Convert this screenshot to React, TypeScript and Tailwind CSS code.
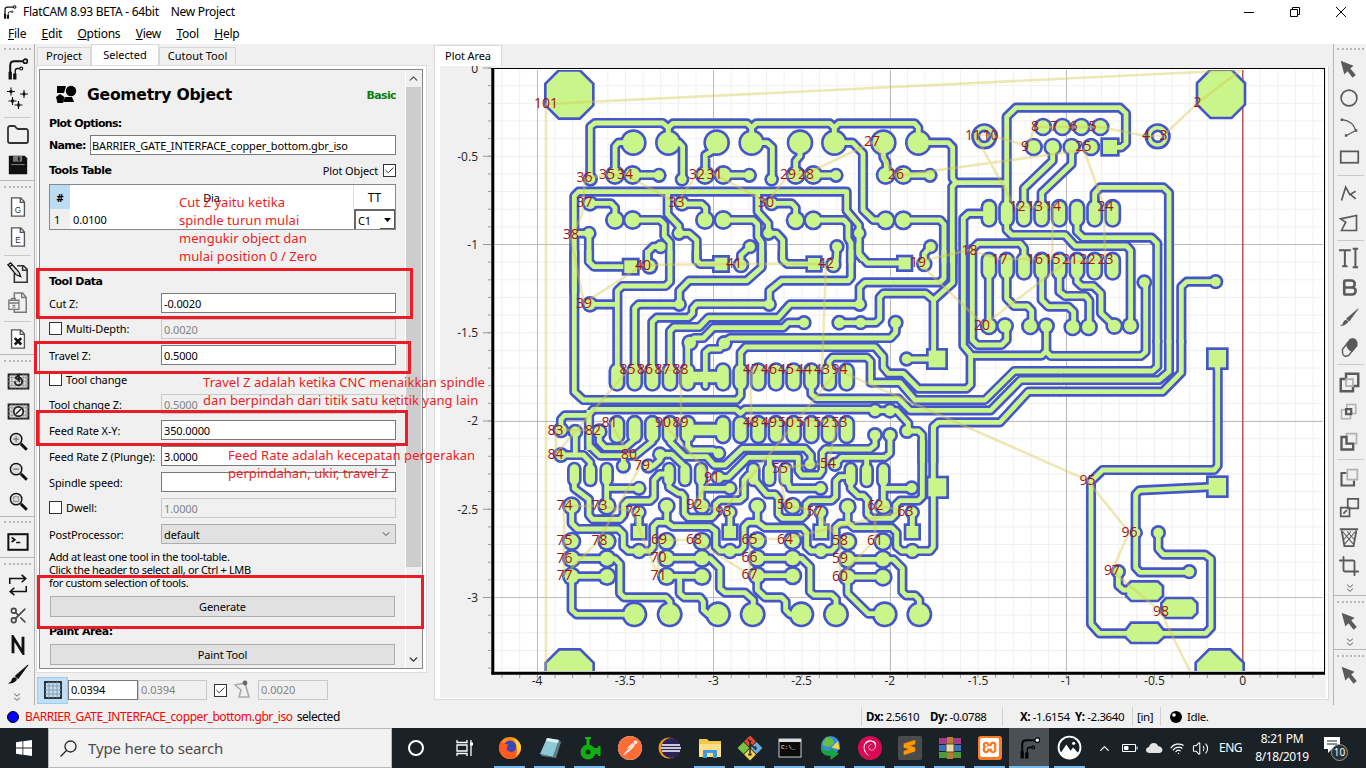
import React from "react";
import { SiPostman, SiDebian, SiXampp, SiSublimetext } from "react-icons/si";
import {
  FolderIcon, SquareTerminal, ZoomIn, ZoomOut, Search, Scissors, Bold, Crop, ChevronUp, ChevronDown, Check,
  Wifi, Volume2,
} from "lucide-react";

/* ---------- board geometry ---------- */
/* Each section holds coordinates in thirds of a pixel, relative to its own origin. */
type Section = {
  x: number;
  y: number;
  traces: string;
  pads?: number[][]; // cx, cy, r
  squares?: number[][]; // cx, cy, half
  ovals?: number[][]; // x, y1, y2, width
  rings?: number[][];
  polys?: string[];
  bars?: number[][]; // x1, x2, y
};

const octagon = (cx: number, cy: number) =>
  [[-30, -68], [30, -68], [68, -30], [68, 31], [30, 69], [-30, 69], [-68, 31], [-68, -30]]
    .map(([a, b]) => `${cx + a},${cy + b}`)
    .join(" ");

const row = (xs: number[], y1: number, y2: number, w: number) => xs.map((x) => [x, y1, y2, w]);
const grid = (xs: number[], ys: number[], r: number) => xs.flatMap((x) => ys.map((y) => [x, y, r]));

const SECTIONS: Section[] = [
  {
    x: 490, y: 60,
    traces:
      "M301 355V200L315 189H518L535 203L549 190H771L785 203L799 190H1019L1033 203L1047 190H1274L1285 203V245 M535 200V248 M785 200V248 M1033 200V248 " +
      "M430 248H385L375 260V345 M428 345H507 M535 248H568L578 260V358 M680 248V265L646 285V345 M700 345H778 " +
      "M253 700V408L266 395H1070V452L1107 495V520 M533 395V462L567 498V520H597L620 540V610 M803 395V455L835 490V520H860L878 540V600 " +
      "M300 430H363L375 443V480 M428 480H510L523 493V528L540 547V610 M253 520H297V610 M512 560H490L473 577V610 " +
      "M576 432H635L647 443V480 M700 480H790L803 493V530L815 548V610",
    pads: [...grid([430, 535, 680], [248], 32), ...grid([375, 428, 645, 700], [345], 22), [507, 346, 15], [301, 357, 15], [576, 358, 14],
      [300, 430, 17], [576, 430, 17], ...grid([375, 428, 645, 700], [480], 22), [297, 520, 15], [567, 520, 15], [512, 560, 15]],
    polys: [octagon(238, 103)],
  },
  {
    x: 730, y: 60,
    traces:
      "M65 248H112L127 262V358 M210 248V288L197 303V345 M250 345H318 M313 248H368L399 280V450L430 480H467 M460 248V292L469 307V345 M520 345H600 " +
      "M565 248H655L668 262V355L678 368H830 M678 368L667 380V610 M125 430H185L197 443V480 M250 480H342L354 493V535L363 550V610 " +
      "M387 520V585L400 600 M520 480H630L642 493V610",
    pads: [...grid([65, 210, 313, 460, 565], [248], 32), [58, 346, 15], [125, 358, 14], [318, 346, 15], [600, 346, 15],
      ...grid([197, 250, 467, 520], [345], 22), ...grid([197, 250, 467, 520], [481], 22), [125, 430, 16], [115, 520, 15], [387, 520, 15],
      [60, 560, 15], [321, 560, 15], [602, 560, 15]],
  },
  {
    x: 940, y: 60,
    traces:
      "M200 460V170L228 143H540L558 160V250L545 262H520 M338 261V302L252 385V440 M395 261V312L305 398V440 " +
      "M200 480V510L215 525H375L405 558H560L572 572V798 M411 480V515L430 533H635L652 550V850 M464 460V400L480 382H670L687 398V850 " +
      "M827 665H740L724 680V850 M147 461H85L70 475V857L95 887H305L318 874L332 888H603L617 876V668 M319 798V880 " +
      "M252 600V565L240 550H115L97 567V840L112 855H185L200 840V800 M147 640V798 M200 640V715L222 738H262L275 752V798 " +
      "M305 640V720L325 740H385L401 755V800 M358 640V695L375 708H437L448 722V800 M411 640V665L425 678H460L483 700V760L523 798 M832 896V930",
    pads: [...grid([309, 367, 424, 481], [201], 20), ...grid([281, 338, 395, 453], [261], 20), [147, 798, 20], [195, 798, 19], [271, 798, 20],
      [319, 798, 18], [398, 801, 20], [446, 801, 20], [523, 798, 19], [571, 797, 19], [613, 667, 16], [827, 665, 15]],
    squares: [[510, 261, 21], [832, 896, 26]],
    ovals: [...row([147, 200, 252, 305, 358, 411, 464, 518], 442, 478, 35), ...row([147, 200, 252, 305, 358, 411, 464, 518], 600, 637, 35)],
    rings: [[133, 229], [653, 229]],
    polys: [octagon(843, 101)],
  },
  {
    x: 490, y: 250,
    traces:
      "M253 0V425L280 450H740L752 437V400 M297 0V35L312 50H400 M473 0V40 M540 0V95L527 108H397L382 122V380 M620 0V30L630 42H680 " +
      "M300 163H382 M434 380V175L446 163H568V122L597 92H770L815 52V0 M487 380V215L500 203H595L608 190V175L620 162H838 " +
      "M540 380V243L552 231H628L655 203H865L900 163H1109 M593 380V290L600 278L612 264H640L670 233H880L895 218H942 " +
      "M646 412V307L658 297H690L703 275L720 264H1202L1217 247V218 M297 600V495L310 478H738L752 490L765 478H1155 M213 540V508L224 496H297",
    pads: [[479, 48, 18], [300, 163, 17], [568, 163, 15], [600, 278, 18], [703, 280, 17], [213, 540, 17], [646, 410, 5]],
    squares: [[422, 50, 19], [693, 42, 19]],
    ovals: row([381, 434, 487, 540, 593, 699, 752, 805, 858, 911, 964, 1017, 1070], 362, 400, 35),
    bars: [[593, 699, 381]],
  },
  {
    x: 730, y: 250,
    traces:
      "M158 0V30L172 42H245 M363 0V82L355 92H155L118 122V163 M386 -20V10L412 39H520 M642 0V85L630 97H405L389 112V163 " +
      "M60 -10L33 15V42 M321 -10L318 45 M602 -10L583 12V42 M668 0V98L611 150L587 130H460L449 142V207L437 218H330 M611 150V327 M530 327H600 " +
      "M32 380V308L47 291H435L460 320V352L475 370H520L565 416H710L722 404V317 M297 380V335L308 322H410L422 334V398H510L555 450H765L853 363H993 " +
      "M244 400V432L260 446H505L540 481H782L872 390H993 M435 482H500L535 520V543H565L577 555V640 M610 640V530L625 517H810L895 425H993",
    pads: [[33, 45, 17], [310, 45, 17], [583, 42, 17], [118, 163, 15], [389, 163, 15], [222, 218, 15], [328, 218, 16], [392, 218, 15],
      [497, 218, 16], [530, 327, 15], [435, 482, 16], [480, 482, 16], [531, 543, 16]],
    squares: [[252, 42, 18], [524, 40, 18], [621, 327, 25]],
  },
  {
    x: 490, y: 400,
    traces:
      "M297 30V135L330 167H435L487 125V90 M328 95V125L345 143H405L434 118 M400 198V167 M213 165H280L301 187V220 M256 95V165 " +
      "M253 230V265L297 298V345L308 358H390L401 345V315L412 303H480L492 292V240L508 222H537 M350 230V318 M350 265H447 " +
      "M245 318V370L262 387H385L400 402V440L415 453H480L490 440V380L502 367H530 M530 318V367L548 380H660L677 393V440L690 453H750L762 440V380L775 367H802 " +
      "M447 337V395 M720 337V395 M245 476H375L390 492V580L402 592H528L540 605V642 M351 529H245V630L260 643H433 M530 475H660L690 505V565L705 578H765L790 600V643 " +
      "M530 529H636 M569 529V580L583 592H630L640 605V630L655 643H684 M475 198H490L510 180V163H545L585 200 " +
      "M537 230V262L565 280H575L583 290V340L595 353H665L677 340V312L690 301H750L762 290V240L775 225H790 M633 230V318 M633 265H720 " +
      "M593 108V138L603 150H670L686 160 M540 108V125L585 170H650L672 195H705L758 145H945L963 165V190 M685 232H715L775 172H925V212L935 225H988L997 212V158L1007 147H1140L1155 135V105",
    pads: [[256, 95, 16], [328, 95, 17], [213, 165, 16], [400, 198, 15], [447, 265, 15], ...grid([245, 351], [318, 424, 476, 529], 21),
      [447, 453, 17], [530, 318, 19], [636, 318, 19], [447, 337, 15], [720, 337, 15], [720, 453, 17], ...grid([530, 636], [424, 475, 529], 21),
      ...grid([433, 539, 684], [643], 31), [475, 198, 15], [510, 163, 16], [720, 265, 15], [686, 160, 15], [685, 232, 16]],
    squares: [[447, 396, 18], [720, 396, 18]],
    ovals: [...row([381, 434, 487, 540, 593, 699, 752, 805, 858, 911, 964, 1017, 1070], 70, 108, 35), ...row([253, 301, 350, 537, 585, 633, 790, 838, 887], 207, 240, 28)],
    bars: [[593, 699, 90]],
    polys: [octagon(239, 820)],
  },
  {
    x: 730, y: 400,
    traces:
      "M315 193L335 172H465L480 160V105 M410 172V205 M118 172V205 M167 230L180 265H272 M70 235L110 283H135L145 295V343L157 355H215L228 343V312L240 302H305L317 290V243L330 230H362 " +
      "M362 240V265L385 287H400L412 300V343L425 355H485L497 343V315L510 302H565L577 290V120 M460 230V318 M460 265H545 " +
      "M82 318V367L105 383H217L230 397V440L243 453H305L317 440V382L330 370H353 M353 320V367L372 383H485L500 398V440L515 453H600L610 440V80 " +
      "M273 337V395 M547 337V395 M82 475H215L240 500V575L252 585H305L318 598V643 M188 527H82V570L105 592H155L167 605V630L180 643H214 " +
      "M353 478H490L517 505V575L528 586H555L568 600V643 M459 531H353V580L415 641H464",
    pads: [[240, 193, 15], [315, 193, 15], [435, 105, 16], [480, 105, 16], [272, 265, 15], [545, 264, 15], [188, 318, 20], [82, 318, 19], [353, 320, 19],
      [460, 318, 20], [273, 337, 15], [547, 337, 15], [273, 453, 17], [547, 453, 17], ...grid([82, 188], [422, 475, 527], 21),
      ...grid([353, 459], [425, 478, 531], 21), ...grid([68, 214, 318, 464, 568], [643], 31)],
    squares: [[273, 396, 18], [547, 396, 18], [622, 262, 27]],
    ovals: row([362, 410, 460], 207, 243, 28),
  },
  {
    x: 1060, y: 340,
    traces:
      "M292 0V80L277 93H0 M327 0V95L297 120H0 M364 0V98L308 155H0 M473 56V377L463 390H128L93 424V852L118 880H437L453 863V657L435 644H310L295 627V578 " +
      "M470 440L238 451L227 463V683L240 697H388 M175 695V737L190 750H215",
    pads: [[295, 578, 15], [388, 695, 15], [175, 695, 15], [229, 578, 12]],
    squares: [[472, 440, 26]],
    polys: [octagon(479, 1000), "215,728 292,728 305,740 305,766 292,779 215,779 202,766 202,740", "320,778 395,778 408,791 408,817 395,830 320,830 308,817 308,791",
      "200,872 215,852 292,852 308,872 308,890 292,905 215,905 200,890"],
  },
];

const BLUE = "#4557c8";
const GREEN = "#caf58b";

function Layer({ grow, color }: { grow: number; color: string }) {
  return (
    <g fill="none" stroke={color} strokeLinejoin="round">
      {SECTIONS.map((s, i) => (
        <g key={i} transform={`translate(${s.x} ${s.y}) scale(.33333)`}>
          <path d={s.traces} strokeWidth={14.5 + 2 * grow} />
          {s.pads?.map(([x, y, r], k) => <circle key={k} cx={x} cy={y} r={r + grow} fill={color} stroke="none" />)}
          {s.squares?.map(([x, y, h], k) => (
            <rect key={k} x={x - h - grow} y={y - h - grow} width={2 * (h + grow)} height={2 * (h + grow)} fill={color} stroke="none" />
          ))}
          {s.ovals?.map(([x, a, b, w], k) => <path key={k} d={`M${x} ${a}V${b}`} strokeWidth={w + 2 * grow} strokeLinecap="round" />)}
          {s.bars?.map(([a, b, y], k) => <path key={k} d={`M${a} ${y}H${b}`} strokeWidth={32 + 2 * grow} />)}
          {s.rings?.map(([x, y], k) => <circle key={k} cx={x} cy={y} r={26} strokeWidth={11 + 2 * grow} />)}
          {s.polys?.map((p, k) => <polygon key={k} points={p} fill={color} strokeWidth={Math.max(0.1, 2 * grow)} strokeLinejoin="miter" />)}
        </g>
      ))}
    </g>
  );
}

const LABELS: [string, number, number][] = [
  ["101", 546, 103], ["2", 1197.5, 102], ["3", 1163.5, 135], ["4", 1146, 135], ["5", 1092.5, 126], ["6", 1073.5, 126], ["7", 1054, 126], ["8", 1035, 126],
  ["9", 1025, 146], ["10", 990.5, 135], ["11", 973, 135], ["12", 1017.5, 206], ["13", 1035, 206], ["14", 1053, 206], ["24", 1105.5, 206],
  ["25", 1083.5, 146], ["18", 969.5, 250], ["17", 999.5, 259], ["16", 1035, 259], ["15", 1052.5, 259], ["21", 1070, 259], ["22", 1087.5, 259], ["23", 1105.5, 259],
  ["19", 918, 262], ["20", 982, 325], ["27", 872, 141], ["26", 896, 174], ["28", 806, 174], ["29", 788, 174], ["30", 766, 202], ["31", 714.5, 174], ["32", 697, 174],
  ["33", 676.5, 202], ["34", 625, 174], ["35", 607, 174], ["36", 584.5, 177], ["37", 584.5, 202], ["38", 571, 234], ["39", 584, 303], ["40", 643, 265], ["41", 734, 263], ["42", 826, 263],
  ["43", 822, 369], ["44", 804, 369], ["45", 786, 369], ["46", 769, 369], ["47", 751, 369], ["94", 839.5, 369], ["48", 751, 422], ["49", 769, 422], ["50", 786, 422],
  ["51", 804, 422], ["52", 821.5, 422], ["53", 839.5, 422], ["54", 828, 463], ["55", 780, 468], ["56", 785, 504], ["57", 814.5, 511], ["58", 840, 540], ["59", 840, 558], ["60", 840, 576],
  ["61", 875, 540], ["62", 875.5, 505], ["63", 905.5, 511], ["64", 785, 539], ["65", 749.5, 539], ["66", 749.5, 557], ["67", 749.5, 574], ["68", 694, 539], ["69", 659, 539],
  ["70", 658.5, 557], ["71", 658.5, 575], ["72", 633, 511], ["73", 599.5, 505], ["74", 564.5, 505], ["75", 564.5, 540], ["76", 564.5, 558], ["77", 564.5, 575], ["78", 599.5, 540],
  ["79", 642, 465], ["80", 629, 454], ["81", 609.5, 422], ["82", 593, 430], ["83", 555.5, 430], ["84", 555.5, 454], ["85", 627.5, 369], ["86", 645, 369], ["87", 662.5, 369], ["88", 680.5, 369],
  ["89", 680.5, 422], ["90", 663, 422], ["91", 712, 477], ["92", 694.5, 504], ["93", 723.5, 511], ["95", 1087.5, 480], ["96", 1129.5, 532], ["97", 1112, 570], ["98", 1161, 611],
];

const TRAVEL =
  "M546 671V104L1241 70L1199 102L1163 136H1146L1100 127H1035L1028 146L990 135H975L1015 207H1053L1052 259H999L969 250L918 262L984 325L1066 262L1105 259L1104 206L1084 150L896 176L873 142L806 174H789L767 202L714 174H697L677 203L626 175H607L585 178L582 215L571 238L584 303L643 265L734 264H826L822 370H751V421H838L828 463L779 468L785 505L814 511L840 540V576L875 540V505L905 511L785 539H750V575L694 540H658V576L632 511L598 506H564V576L599 540L641 465L628 453L610 422 M593 430H556V454L628 370H681V422H662L712 477L694 504L723 511L838 370L1087 480L1129 532L1112 571L1160 611L1190 671";

function Plot() {
  const minorX = Array.from({ length: 48 }, (_, i) => 1242.5 - 17.63 * (i - 4));
  const minorY = Array.from({ length: 35 }, (_, i) => 68 + 17.65 * i);
  return (
    <svg viewBox="440 66 886 632" className="block h-[632px] w-[886px]" fontFamily="'Open Sans','Noto Sans',sans-serif">
      <rect x="440" y="66" width="886" height="632" fill="#f0f0f0" />
      <rect x="492" y="69" width="832" height="605" fill="#fff" />
      <g stroke="#f0f0f0" strokeWidth="1">
        {minorX.filter((x) => x > 496 && x < 1322).map((x) => <path key={x} d={`M${x} 70V671`} />)}
        {minorY.filter((y) => y > 70 && y < 671).map((y) => <path key={y} d={`M495 ${y}H1323`} />)}
      </g>
      <g stroke="#bcbcbc" strokeWidth="1">
        <path d="M537.5 70V671M713.5 70V671M890.5 70V671M1066.5 70V671M495 244.5H1323M495 421.5H1323M495 597.5H1323" />
      </g>
      <path d="M1242.8 70V671" stroke="#a83c3c" strokeWidth="1.3" />
      <clipPath id="board"><rect x="494" y="70" width="829" height="601" /></clipPath>
      <g clipPath="url(#board)">
        <Layer grow={8} color={BLUE} />
        <Layer grow={0} color={GREEN} />
        <path d={TRAVEL} fill="none" stroke="#d6c84e" strokeOpacity=".42" strokeWidth="2.6" />
      </g>
      <g fill="#a31515" fontSize="14" textAnchor="middle">
        {LABELS.map(([t, x, y]) => <text key={t} x={x} y={y + 5}>{t}</text>)}
      </g>
      <path d="M492.8 68V674.5" stroke="#000" strokeWidth="3" />
      <path d="M491.5 673.2H1325" stroke="#000" strokeWidth="3" />
      <path d="M491 68.5H1325M1324.5 68V674" stroke="#000" strokeWidth="1" fill="none" />
      <g stroke="#999" strokeWidth="1">
        {minorX.filter((x) => x > 496 && x < 1322).map((x) => <path key={x} d={`M${x} 675V678`} />)}
        {minorY.filter((y) => y < 671).map((y) => <path key={y} d={`M488 ${y}H491`} />)}
        {minorY.filter((_, i) => i % 5 === 0).map((y) => <path key={y} d={`M483 ${y}H491`} />)}
      </g>
      <g fill="#222" fontSize="12">
        {["-4", "-3.5", "-3", "-2.5", "-2", "-1.5", "-1", "-0.5", "0"].map((t, i) => (
          <text key={t} x={537 + i * 88.2} y="685" textAnchor="middle">{t}</text>
        ))}
        {["0", "-0.5", "-1", "-1.5", "-2", "-2.5", "-3"].map((t, i) => (
          <text key={t} x="478" y={72.5 + i * 88.2} textAnchor="end">{t}</text>
        ))}
      </g>
    </svg>
  );
}

/* ---------- toolbars ---------- */
function Ico({ children, w = 24, c = "#111" }: { children: React.ReactNode; w?: number; c?: string }) {
  return (
    <svg viewBox="0 0 24 24" width={w} height={w} fill="none" stroke={c} strokeWidth="2" className="shrink-0">
      {children}
    </svg>
  );
}
const Cell = ({ children }: { children: React.ReactNode }) => <div className="flex h-[30px] w-full items-center justify-center pl-[2px]">{children}</div>;
const RCell = ({ children }: { children: React.ReactNode }) => <div className="flex h-[29.6px] w-full items-center justify-center pr-[2px]">{children}</div>;
const Dots = ({ className = "" }: { className?: string }) => (
  <div className={`flex w-full items-center justify-center ${className}`}><div className="w-[27px] border-t-2 border-dotted border-[#b8b8b8]" /></div>
);
const Sep = () => <div className="flex h-[6px] w-full items-center justify-center"><div className="h-px w-[27px] bg-[#c9c9c9]" /></div>;

const FPath = () => (
  <>
    <path d="M3.5 18V8Q3.5 3.5 8 3.5H18" strokeWidth="2.2" />
    <path d="M9 18V14Q9 11.5 11.5 11.5H14" strokeWidth="1.5" />
    <circle cx="20" cy="3.5" r="2.2" strokeWidth="1.8" /><circle cx="15.5" cy="11.5" r="1.6" strokeWidth="1.3" />
    <path d="M3.5 15V23.5M8.5 17V23.5" strokeWidth="3.6" />
  </>
);
const Doc = ({ children }: { children?: React.ReactNode }) => (
  <Ico w={22}><path d="M5 2H15L19 6.5V22H5ZM14.5 2V7H19" strokeWidth="1.5" stroke="#555" fill="#fff" />{children}</Ico>
);
const Arrow = () => (
  <svg viewBox="0 0 24 24" width="22" height="22" fill="#5a5a5a" className="mr-[2px] shrink-0"><path d="M4 3L18 8.5L14.5 11.5L20.5 18.5L17 21.5L11.5 14.5L8 18Z" /></svg>
);
const Chev = () => <Ico w={10} c="#555"><path d="M5 4L12 10L19 4M5 14L12 20L19 14" strokeWidth="2.2" /></Ico>;
const ReplotGrid = ({ children }: { children: React.ReactNode }) => (
  <svg viewBox="0 0 24 18" width="23" height="17" fill="none" stroke="#222">
    <rect x="1.5" y="1.5" width="21" height="15" strokeWidth="2" fill="#ddd" />
    <path d="M5 0V18M9 0V18M13 0V18M17 0V18M20 0V18M0 5H24M0 9H24M0 13H24" strokeWidth=".7" stroke="#888" />
    {children}
  </svg>
);

function LeftToolbar() {
  return (
    <div className="flex w-[35px] shrink-0 flex-col items-center overflow-hidden border-r border-[#b5b5b5] bg-[#f0f0f0]">
      <Dots className="h-[10px] shrink-0" />
      <Cell><Ico w={22}><FPath /></Ico></Cell>
      <Cell><Ico><path d="M5 0.5V8.5M1 4.5H9M18 3V11M14 7H22M6.500 10V18M2.500 14H10.500M12.500 14V22M8.500 18H16.500" strokeWidth="1.1" /><path d="M5 3V6M18 5.500V8.500M6.500 12.500V15.500M12.500 16.500V19.500" strokeWidth="2.600" /></Ico></Cell>
      <Sep />
      <Cell><FolderIcon size={24} strokeWidth={1.8} color="#333" /></Cell>
      <Cell><Ico w={20}><path d="M2 1H20L23 4V23H1V1Z" fill="#111" stroke="none" /><path d="M6 1H17V8H6Z" fill="#777" stroke="none" /><path d="M13 2V7" /><path d="M4 11.5H20" stroke="#999" strokeWidth="1" /></Ico></Cell>
      <Dots className="h-[12px] shrink-0 border-t border-[#b5b5b5]" />
      <Cell><Doc><text x="12" y="18" fontSize="9" textAnchor="middle" fill="#333" stroke="none" fontFamily="Liberation Sans">G</text></Doc></Cell>
      <Cell><Doc><text x="12" y="18" fontSize="9" textAnchor="middle" fill="#333" stroke="none" fontFamily="Liberation Sans">E</text></Doc></Cell>
      <Sep />
      <Cell><Ico w={22}><path d="M11 4H18L22 8V22H8V12M17 4V9H22" strokeWidth="1.7" stroke="#333" /><path d="M1 3L4 1L13 11L15 16L10 14L1 3ZM3 5L6 3" strokeWidth="1.4" fill="#ddd" /></Ico></Cell>
      <Cell><Ico w={22} c="#777"><path d="M8 8V1H17L21 6V22H8V19M16 1V6H21" strokeWidth="1.6" /><path d="M2 9H13V19H2ZM2 12H13M5 9V7H9V9M6 14L9 17M9 14L6 17" strokeWidth="1.4" /></Ico></Cell>
      <Sep />
      <Cell><Doc><path d="M8.5 11L15.500 18M15.500 11L8.500 18" strokeWidth="2.800" /></Doc></Cell>
      <Dots className="h-[12px] shrink-0 border-t border-[#b5b5b5]" />
      <Cell><ReplotGrid><path d="M8 9A4 4 0 1 0 12 5M12.500 2V8L9 5Z" strokeWidth="2" /></ReplotGrid></Cell>
      <Cell><ReplotGrid><circle cx="12" cy="9" r="5" fill="#eee" strokeWidth="1.8" /><path d="M9 12L15 6" strokeWidth="1.5" /></ReplotGrid></Cell>
      {[<path key="a" d="M9 5.500V12.500M5.500 9H12.500" stroke="#777" strokeWidth="1.600" />, <path key="b" d="M5.500 9H12.500" stroke="#777" strokeWidth="1.600" />, <rect key="c" x="6" y="6" width="6" height="6" stroke="#999" strokeWidth="1.500" />].map((mark, i) => (
        <Cell key={i}><Ico w={19}><circle cx="9" cy="9" r="7.200" fill="#ddd" strokeWidth="1.800" />{mark}<path d="M15 15L22.500 22.500" strokeWidth="3.600" /></Ico></Cell>
      ))}
      <Dots className="h-[11px] shrink-0 border-t border-[#b5b5b5]" />
      <Cell><Ico w={22}><rect x="1.500" y="3.500" width="21" height="17" strokeWidth="2.200" /><path d="M5 7L8.500 9.500L5 12M10 12.500H14.500" strokeWidth="1.800" /></Ico></Cell>
      <Dots className="h-[13px] shrink-0 border-t border-[#b5b5b5]" />
      <Cell><Ico w={22}><path d="M3 11V5H20M16 1L20.5 5L16 9M21 13V19H4M8 15L3.5 19L8 23" strokeWidth="1.7" /></Ico></Cell>
      <Cell><Scissors size={19} color="#444" /></Cell>
      <Cell><Ico w={20}><path d="M6 22V2.500L18 21.500V2" strokeWidth="3.400" /></Ico></Cell>
      <Cell><Ico w={22}><path d="M23 1L9 13L12 16Z" fill="#111" strokeWidth="1" /><path d="M1 21Q5 20 5 17Q7 13 10 15Q12 17 9 19Q6 22 1 21Z" fill="#111" stroke="none" /></Ico></Cell>
      <div className="flex h-[14px] items-center"><Chev /></div>
    </div>
  );
}

function RightToolbar() {
  const g = "#5a5a5a";
  const l = "#b0b0b0";
  return (
    <div className="flex w-[33px] shrink-0 flex-col items-center overflow-hidden border-l border-[#b5b5b5] bg-[#f0f0f0]">
      <Dots className="h-[10px] shrink-0" />
      <RCell><Arrow /></RCell>
      <RCell><Ico w={20} c={g}><circle cx="12" cy="12" r="9.5" /></Ico></RCell>
      <RCell><Ico w={20} c={g}><path d="M4 2Q17 4 20 15L9 21" strokeWidth="1.600" /><path d="M2 2H5M7 21H10M19 15H22" strokeWidth="3" /></Ico></RCell>
      <RCell><Ico w={21} c={g}><rect x="2" y="5" width="20" height="13" /></Ico></RCell>
      <Sep />
      <RCell><Ico w={20} c={g}><path d="M3 21L8 5L13 14L20 10M20 19L14 14" /></Ico></RCell>
      <RCell><Ico w={20} c={g}><path d="M3 21L8 11L2 7L21 3V21Z" /></Ico></RCell>
      <Sep />
      <RCell><Ico w={22} c={g}><path d="M1 3.500H14M7.500 3.500V21M4.500 21H10.500M19 2V22M16 2H22M16 22H22" strokeWidth="2.200" /></Ico></RCell>
      <RCell><Bold size={21} strokeWidth={3} color={g} /></RCell>
      <RCell><Ico w={20} c={g}><path d="M23 1L9 13L12 16Z" fill={g} strokeWidth="1" /><path d="M1 21Q5 20 5 17Q7 13 10 15Q12 17 9 19Q6 22 1 21Z" fill={g} stroke="none" /></Ico></RCell>
      <RCell><Ico w={21} c={g}><path d="M4 14L13 3Q18 1 20 6L20 10L11 21Q5 24 4 18Z" strokeWidth="1.6" /><path d="M9 8L13 3Q18 1 20 6V10L15 16Q10 14 9 8Z" fill={g} /></Ico></RCell>
      <Sep />
      <RCell><Ico w={21} c={g}><path d="M8 2H22V16H16V22H2V8H8Z" strokeWidth="2.800" /><path d="M8 8H16V16H8Z" stroke={l} /></Ico></RCell>
      <RCell><Ico w={18} c={l}><path d="M9 2H21V14H9ZM2 9H14V21H2Z" /><path d="M8 8H15V15H8Z" stroke={g} strokeWidth="2.8" /></Ico></RCell>
      <RCell><Ico w={20} c={l}><path d="M9 2H21V14H9Z" /><path d="M3 6H9V14H17V21H3Z" stroke={g} strokeWidth="2.8" /></Ico></RCell>
      <Sep />
      <RCell><Ico w={20} c={g}><path d="M9 6H3V21H18V15" strokeWidth="2.6" /><path d="M10 2H22V14H10Z" stroke={l} /></Ico></RCell>
      <RCell><Ico w={21} c={g}><path d="M10 2H22V13H10ZM2 12H12V22H2Z" /><path d="M5 19L9 15" /></Ico></RCell>
      <RCell><Ico w={22} c={g}><path d="M2 3.500H22M4 5L7 22H17L20 5" /><path d="M5 6L17 20M10 6L18 15M19 6L7 20M14 6L6 15" strokeWidth="1.2" /></Ico></RCell>
      <RCell><Crop size={22} color={g} /></RCell>
      <div className="flex h-[14px] items-center"><Chev /></div>
      <Dots className="h-[12px] shrink-0 border-t border-[#b5b5b5]" />
      <div className="flex h-[28px] items-center"><Arrow /></div>
      <div className="flex h-[14px] items-center"><Chev /></div>
      <Dots className="h-[12px] shrink-0 border-t border-[#b5b5b5]" />
      <div className="flex h-[28px] items-center"><Arrow /></div>
    </div>
  );
}

/* ---------- geometry form ---------- */
const Box = ({ checked = false }: { checked?: boolean }) => (
  <span className="flex h-[13px] w-[13px] shrink-0 items-center justify-center border border-[#333] bg-white">{checked && <Check size={11} color="#222" />}</span>
);

function Field({ label, value, disabled, check, mt = "mt-[6px]" }: { label: string; value: string; disabled?: boolean; check?: boolean; mt?: string }) {
  return (
    <div className={`flex h-[20px] items-center ${mt}`}>
      <div className={`flex w-[112px] shrink-0 items-center whitespace-nowrap ${check ? "-mt-[2px]" : ""}`}>
        {check && <span className="mr-[4px]"><Box /></span>}{label}
      </div>
      <div className={`flex h-[20px] w-[235px] items-center border pl-[2px] pt-px ${disabled ? "border-[#c8c8c8] bg-[#f0f0f0] text-[#838383]" : "border-[#7a7a7a] bg-white"}`}>{value}</div>
    </div>
  );
}

function Form() {
  return (
    <div className="flex h-[600px] w-[384px] overflow-hidden border border-[#828790] bg-[#f0f0f0] text-[11px] leading-[13px] tracking-[-0.12px]">
      <div className="w-[365px] shrink-0 pl-[9px]">
        <div className="flex h-[45px] w-[347px] items-center pt-[5px]">
          <svg viewBox="0 0 22 20" width="22" height="20" className="ml-[6px]"><path d="M2 1H11L9 8H2ZM10 12H17L19 17H8Z" /><circle cx="16" cy="6" r="5.2" /><path d="M5 9L9.5 12L8 18H2.5L1 12Z" /></svg>
          <span className="ml-[10px] text-[15.6px] font-bold tracking-[-0.25px] [font-family:'DejaVu_Sans']">Geometry Object</span>
          <span className="ml-auto font-bold tracking-[-0.65px] text-[#0b800b] [font-family:'DejaVu_Sans']">Basic</span>
        </div>
        <div className="flex h-[17px] items-center font-bold tracking-[-0.65px] [font-family:'DejaVu_Sans']">Plot Options:</div>
        <div className="mt-[3px] flex h-[20px] w-[347px] items-center">
          <span className="w-[41px] font-bold tracking-[-0.65px] [font-family:'DejaVu_Sans']">Name:</span>
          <div className="flex h-[20px] flex-1 items-center border border-[#7a7a7a] bg-white pl-[1px] pt-px tracking-[-0.15px]">BARRIER_GATE_INTERFACE_copper_bottom.gbr_iso</div>
        </div>
        <div className="mt-[5px] flex h-[20px] w-[347px] items-center">
          <span className="font-bold tracking-[-0.5px] [font-family:'DejaVu_Sans']">Tools Table</span>
          <span className="ml-auto mr-[5px]">Plot Object</span><Box checked />
        </div>
        <div className="mt-[4px] grid h-[46px] w-[347px] grid-cols-[20px_1fr_41px] grid-rows-[24px_1fr] border border-[#828790] bg-white">
          <div className="flex items-center justify-center bg-[#bcdcf4] font-bold">#</div>
          <div className="flex items-center justify-center border-r border-[#ddd]">Dia</div>
          <div className="flex items-center justify-center text-[12px]">TT</div>
          <div className="flex items-center bg-[#f0f0f0] pl-[4px]">1</div>
          <div className="flex items-center pl-[3px]">0.0100</div>
          <div className="flex items-center border-l-2 border-t-2 border-[#666] pl-[2px]">C1
            <span className="ml-auto flex h-[18px] w-[15px] items-center justify-center border-b border-r border-[#555] bg-white"><svg width="7" height="4"><path d="M0 0H7L3.5 4Z" /></svg></span>
          </div>
        </div>
        <div className="mt-[42px] flex h-[18px] items-center font-bold tracking-[-0.5px] [font-family:'DejaVu_Sans']">Tool Data</div>
        <Field label="Cut Z:" value="-0.0020" mt="mt-[3px]" />
        <Field label="Multi-Depth:" value="0.0020" disabled check />
        <Field label="Travel Z:" value="0.5000" />
        <div className="mt-[4px] flex h-[20px] items-center"><span className="mr-[4px]"><Box /></span>Tool change</div>
        <Field label="Tool change Z:" value="0.5000" disabled mt="mt-[5px]" />
        <Field label="Feed Rate X-Y:" value="350.0000" />
        <Field label="Feed Rate Z (Plunge):" value="3.0000" />
        <Field label="Spindle speed:" value="" />
        <Field label="Dwell:" value="1.0000" disabled check />
        <div className="mt-[6px] flex h-[20px] items-center">
          <span className="w-[112px] pt-[1px]">PostProcessor:</span>
          <div className="flex h-[20px] w-[235px] items-center border border-[#acacac] bg-[#e1e1e1] pl-[2px] pr-[3px]">default<ChevronDown size={12} className="ml-auto" color="#444" /></div>
        </div>
        <div className="mt-[6px] whitespace-nowrap tracking-[-0.34px]">Add at least one tool in the tool-table.<br />Click the header to select all, or Ctrl + LMB<br />for custom selection of tools.</div>
        <div className="ml-[1px] mt-[7px] flex h-[21px] w-[345px] items-center justify-center border border-[#adadad] bg-[#e1e1e1]">Generate</div>
        <div className="mt-[5px] flex h-[18px] items-center font-bold tracking-[-0.5px] [font-family:'DejaVu_Sans']">Paint Area:</div>
        <div className="ml-[1px] mt-[4px] flex h-[21px] w-[345px] items-center justify-center border border-[#adadad] bg-[#e1e1e1]">Paint Tool</div>
      </div>
      <div className="flex w-[16px] flex-col items-center border-l border-white">
        <div className="flex h-[17px] items-center"><ChevronUp size={13} strokeWidth={2.6} color="#555" /></div>
        <div className="h-[480px] w-[15px] bg-[#cdcdcd]" />
        <div className="mt-auto flex h-[18px] items-center"><ChevronDown size={13} strokeWidth={2.6} color="#333" /></div>
      </div>
    </div>
  );
}

function LeftPanel() {
  return (
    <div className="flex w-[399px] shrink-0 flex-col pl-[1px] text-[11px]">
      <div className="flex h-[21px] items-end pl-[1px]">
        <div className="flex h-[18px] w-[54px] items-center justify-center border border-b-0 border-[#d9d9d9] bg-[#f0f0f0]">Project</div>
        <div className="flex h-[21px] w-[68px] items-center justify-center border border-b-0 border-[#d9d9d9] bg-white">Selected</div>
        <div className="flex h-[18px] w-[77px] items-center justify-center border border-b-0 border-[#d9d9d9] bg-[#f0f0f0]">Cutout Tool</div>
      </div>
      <div className="h-[608px] w-[391px] border border-[#dcdcdc] bg-white p-[3px] pl-[2px]"><Form /></div>
      <div className="mt-[3px] flex h-[28px] items-center pl-[1px]">
        <div className="flex h-[27px] w-[31px] items-center justify-center border border-[#99cdf5] bg-[#bfdff6]">
          <svg width="18" height="18" viewBox="0 0 18 18" fill="none" stroke="#222"><rect x="1" y="1" width="16" height="16" strokeWidth="1.8" /><path d="M5 1V17M9 1V17M13 1V17M1 5H17M1 9H17M1 13H17" stroke="#8a9aa8" /></svg>
        </div>
        <div className="flex h-[20px] w-[70px] items-center border border-[#7a7a7a] bg-white pl-[2px]">0.0394</div>
        <div className="flex h-[20px] w-[69px] items-center border border-[#c8c8c8] pl-[2px] text-[#838383]">0.0394</div>
        <span className="ml-[7px]"><Box checked /></span>
        <svg width="18" height="20" viewBox="0 0 18 20" className="ml-[6px]" fill="none" stroke="#aaa" strokeWidth="1.6"><path d="M2 5L12 3L16 17H6L8 10Z" /><circle cx="12" cy="3" r="2.4" fill="#666" stroke="none" /></svg>
        <div className="ml-[7px] flex h-[20px] w-[70px] items-center border border-[#c8c8c8] pl-[2px] text-[#838383]">0.0020</div>
      </div>
    </div>
  );
}

/* ---------- taskbar ---------- */
const APPS: { icon: React.ReactNode; line?: boolean; active?: boolean }[] = [
  { line: true, icon: <svg viewBox="0 0 24 24" width="24"><circle cx="12" cy="12" r="11" fill="#ff8a16" /><circle cx="12" cy="11" r="6.5" fill="#3b47b8" /><path d="M3 5Q6 9 11 8Q8 10 9 14Q13 18 18 14Q20 8 15 2Q23 5 23 13Q21 23 12 23Q2 22 1 12Q1 8 3 5Z" fill="#ff5a1f" /><path d="M15 2Q23 5 23 12Q22 18 18 20Q21 11 15 2Z" fill="#ffd43a" /></svg> },
  { line: true, icon: <svg viewBox="0 0 24 24" width="24"><path d="M9 2L21 4L15 21L2 18Z" fill="#8fc9d6" /><path d="M9 2L21 4L20 7L8 5Z" fill="#e6eef0" /><path d="M15 21L21 4L23 6L18 22L4 20L2 18Z" fill="#5f7f8a" /></svg> },
  { line: true, icon: <svg viewBox="0 0 24 24" width="24"><path d="M7 1H13V3H11.500V9.500H8.500V3H7Z" fill="#18b818" /><circle cx="10" cy="16" r="7.500" fill="#12ad12" /><path d="M16 12H20V10H22.500V20H20V18H16Z" fill="#12ad12" /><circle cx="10" cy="16" r="2.500" fill="#043d04" /></svg> },
  { icon: <SiPostman size={24} color="#ff6c37" className="rounded-full bg-white" /> },
  { icon: <svg viewBox="0 0 24 24" width="24"><circle cx="11" cy="12" r="10.5" fill="#f7941e" /><circle cx="13" cy="12" r="10" fill="#2c2255" /><path d="M4 9H22M3 12H23M4 15H22" stroke="#fff" strokeWidth="1.6" /></svg> },
  { line: true, icon: <svg viewBox="0 0 24 24" width="24"><path d="M1 3H9L11 5H23V21H1Z" fill="#f3c64c" /><path d="M1 8H23V21H1Z" fill="#ffe08a" /><path d="M5 14H19V22H15V17H9V22H5Z" fill="#3a9be0" /></svg> },
  { line: true, icon: <svg viewBox="0 0 24 24" width="26"><path d="M12 0.500L17.500 6L12 11.500L6.500 6Z" fill="#e8492f" /><path d="M18 6.500L23.500 12L18 17.500L12.500 12Z" fill="#6fa8dc" /><path d="M6 6.500L11.500 12L6 17.500L0.500 12Z" fill="#7ac143" /><path d="M12 12.500L17.500 18L12 23.500L6.500 18Z" fill="#f2d14c" /><path d="M10 4L12 6V17M12 8L16 12" stroke="#222" strokeWidth="1.3" fill="none" /><path d="M12 17V19M16 12H18M12 5V6" stroke="#222" strokeWidth="3" /></svg> },
  { line: true, icon: <svg viewBox="0 0 24 24" width="24"><rect x="1" y="3" width="22" height="18" fill="#0b0b0b" stroke="#ccc" /><rect x="1" y="3" width="22" height="3" fill="#ddd" /><text x="3" y="13" fontSize="6" fill="#fff" fontFamily="Liberation Mono">C:\_</text></svg> },
  { line: true, icon: <svg viewBox="0 0 24 24" width="25"><circle cx="13" cy="10" r="9" fill="#3a8dde" /><path d="M9 2Q16 2 16 8Q12 14 5 9Z" fill="#62c13e" /><path d="M14 12L20 6L22 14Z" fill="#ffd83b" /><path d="M4 9Q5 16 13 15V12L21 18L13 24V20Q2 20 4 9Z" fill="#19a340" /></svg> },
  { line: true, icon: <span className="flex h-[24px] w-[24px] items-center justify-center rounded-full bg-[#d70a53]"><SiDebian size={16} color="#fff" /></span> },
  { line: true, icon: <span className="flex h-[24px] w-[24px] items-center justify-center rounded-[2px] bg-[#4b4b4b]"><SiSublimetext size={15} color="#ff9800" /></span> },
  { line: true, icon: <svg viewBox="0 0 24 24" width="24"><path d="M1 2H23V8H1Z" fill="#a33a88" /><path d="M1 9H23V15H1Z" fill="#3d6fc4" /><path d="M1 16H23V22H1Z" fill="#4c9a3a" /><path d="M9 1H15V23H9Z" fill="#b97a34" /><rect x="8" y="8" width="8" height="8" fill="#e8d9a8" stroke="#553" /></svg> },
  { line: true, icon: <span className="flex h-[24px] w-[24px] items-center justify-center rounded-[3px] bg-[#fb7a24]"><SiXampp size={19} color="#fff" /></span> },
  { active: true, line: true, icon: <svg viewBox="0 0 24 24" width="22" fill="none" stroke="#050505" strokeWidth="2.2"><FPath /><circle cx="20" cy="3.500" r="1.800" fill="#fff" stroke="none" /></svg> },
  { line: true, icon: <svg viewBox="0 0 24 24" width="25" fill="none" stroke="#fff" strokeWidth="1.8"><circle cx="12" cy="12" r="10.5" /><path d="M3 18L9 9L13 15L15.500 12L21 18Q17 22 12 22Q6 22 3 18Z" fill="#fff" stroke="none" /><circle cx="16" cy="8" r="1.5" fill="#fff" stroke="none" /></svg> },
];

function Taskbar() {
  return (
    <div className="flex h-[40px] shrink-0 items-stretch bg-[#1b2227] text-white">
      <div className="flex w-[48px] items-center justify-center"><svg width="16" height="16" viewBox="0 0 16 16" fill="#fff"><path d="M0 2.2L6.5 1.3V7.6H0ZM7.3 1.2L16 0V7.6H7.3ZM0 8.4H6.5V14.7L0 13.8ZM7.3 8.4H16V16L7.3 14.8Z" /></svg></div>
      <div className="flex w-[344px] items-center border border-[#b9b9b9] bg-[#f2f2f2] text-[15px] text-[#4a4a4a]">
        <svg width="17" height="17" viewBox="0 0 17 17" className="ml-[11px]" fill="none" stroke="#222" strokeWidth="1.300"><circle cx="10.500" cy="6.500" r="5.500" /><path d="M6.500 10.500L0.500 16.500" /></svg>
        <span className="ml-[11px] tracking-[-0.15px]">Type here to search</span>
      </div>
      <div className="flex w-[48px] items-center justify-center"><span className="h-[16px] w-[16px] rounded-full border-[2.5px] border-white" /></div>
      <div className="flex w-[49px] items-center justify-center"><svg width="18" height="16" viewBox="0 0 18 16" fill="none" stroke="#fff" strokeWidth="1.3"><path d="M1 0V2.5H11V0M1 5H11V11H1ZM1 16V13.5H11V16M15 0V16" /><path d="M14 4H17" strokeWidth="3" /></svg></div>
      {APPS.map((a, i) => (
        <div key={i} className={`flex w-[40px] flex-col items-center justify-between ${a.active ? "bg-[#4a5054]" : ""}`}>
          <div className="flex h-[38px] items-center pl-[1px] pt-[1px]">{a.icon}</div>
          {a.line && <div className={a.active ? "h-[2px] w-full bg-[#76b9ed]" : "h-[2px] w-[31px] bg-[#76b9ed]"} />}
        </div>
      ))}
      <div className="flex flex-1 items-center pl-[8px] text-[12px]">
        <ChevronUp size={15} />
        <svg width="16" height="10" viewBox="0 0 16 10" fill="none" stroke="#fff" className="ml-[10px]"><path d="M.5 1.500H13.500V8.500H.5ZM15 3.500V6.500" /><path d="M2.500 3.500H6V6.500H2.500Z" fill="#fff" /></svg>
        <svg width="17" height="12" viewBox="0 0 17 12" className="ml-[8px]"><path d="M4 11Q0 11 0 8Q0 5.500 3 5Q4 1 8 1Q11 1 12 4Q16 4.500 16.500 8Q16 11 13 11Z" fill="#e4e4e4" /></svg>
        <Wifi size={15} className="ml-[7px] -rotate-12" />
        <Volume2 size={17} strokeWidth={1.5} className="ml-[7px]" />
        <span className="ml-[10px] w-[24px] tracking-[-0.5px]">ENG</span>
        <div className="ml-[8px] w-[62px] whitespace-nowrap text-center leading-[18px] tracking-[-0.4px]">8:21 PM<br />8/18/2019</div>
        <div className="relative ml-[10px] h-[24px] w-[28px]">
          <svg width="18" height="18" viewBox="0 0 18 18"><path d="M1 1H17V13H9L5 17V13H1Z" fill="#fff" /><path d="M4 5H14M4 8H14" stroke="#1b2227" /></svg>
          <span className="absolute left-[8px] top-[8px] flex h-[17px] w-[17px] items-center justify-center rounded-full border border-[#999] bg-[#2b3136] text-[10px]">10</span>
        </div>
      </div>
    </div>
  );
}

const MarkBox = ({ className }: { className: string }) => <div className={`pointer-events-none absolute border-[3px] border-[#ed1c24] ${className}`} />;
const Note = ({ className, children }: { className: string; children: React.ReactNode }) => (
  <div className={`pointer-events-none absolute whitespace-nowrap text-[13px] leading-[18px] tracking-[0.05px] text-[#ed1c24] ${className}`}>{children}</div>
);

export default function App() {
  return (
    <div className="relative flex h-[768px] w-[1366px] flex-col overflow-hidden bg-[#f0f0f0] text-[12px] text-black [font-family:'Noto_Sans','Open_Sans',sans-serif]">
      <div className="flex h-[24px] shrink-0 items-center bg-white">
        <svg viewBox="0 0 24 24" width="14" height="14" className="ml-[3px]" fill="none" stroke="#111" strokeWidth="2"><FPath /></svg>
        <span className="ml-[6px] whitespace-pre tracking-[-0.3px]">FlatCAM 8.93 BETA - 64bit</span>
        <span className="ml-[12px] tracking-[-0.3px]">New Project</span>
        <div className="ml-auto flex items-center gap-[36px] pr-[20px]">
          <svg width="10" height="10"><path d="M0 5.5H10" stroke="#000" /></svg>
          <svg width="10" height="10" fill="none" stroke="#000"><path d="M.5 2.5H7.5V9.5H.5ZM2.5 2.5V.5H9.5V7.5H7.5" /></svg>
          <svg width="10" height="10"><path d="M0 0L10 10M10 0L0 10" stroke="#000" /></svg>
        </div>
      </div>
      <div className="flex h-[20px] shrink-0 items-center gap-[15.4px] bg-white pl-[8px] tracking-[-0.25px]">
        {["File", "Edit", "Options", "View", "Tool", "Help"].map((m) => (
          <span key={m}><span className="underline">{m[0]}</span>{m.slice(1)}</span>
        ))}
      </div>
      <div className="flex h-[661px] shrink-0">
        <LeftToolbar />
        <LeftPanel />
        <div className="flex flex-1 flex-col">
          <div className="flex h-[22px] items-end"><div className="flex h-[21px] w-[68px] items-center justify-center border border-b-0 border-[#d9d9d9] bg-white text-[11px] tracking-[-0.1px]">Plot Area</div></div>
          <div className="w-[895px] border border-t-0 border-[#dcdcdc] bg-white pb-[1px] pl-[5px]"><Plot /></div>
        </div>
        <RightToolbar />
      </div>
      <div className="flex h-[23px] shrink-0 items-center text-[12px] tracking-[-0.42px]">
        <span className="ml-[7px] h-[12px] w-[12px] rounded-full border border-black bg-[#0000ff]" />
        <span className="ml-[6px] text-[#ff0000]">BARRIER_GATE_INTERFACE_copper_bottom.gbr_iso</span><span className="ml-[4px]">selected</span>
        <div className="ml-auto flex h-[19px] w-[505px] items-center border-l border-[#d0d0d0] text-[11.5px] tracking-[-0.4px]">
          <span className="ml-[4px] w-[64px]"><b>Dx:</b> 2.5610</span><span className="w-[72px]"><b>Dy:</b> -0.0788</span>
          <span className="flex h-full w-[73px] items-center border-l border-[#d0d0d0] pl-[17px]"><span className="whitespace-nowrap"><b>X:</b> -1.6154</span></span>
          <span className="w-[57px] whitespace-nowrap"><b>Y:</b> -2.3640</span>
          <span className="flex h-full w-[29px] items-center border-x border-[#d0d0d0] pl-[4px]">[in]</span>
          <svg width="12" height="12" className="ml-[9px]"><circle cx="6" cy="6" r="6" /><circle cx="4" cy="4" r="1.8" fill="#fff" /></svg>
          <span className="ml-[5px]">Idle.</span>
        </div>
      </div>
      <Taskbar />

      <MarkBox className="left-[36px] top-[268px] h-[51px] w-[377px]" />
      <MarkBox className="left-[34px] top-[341px] h-[33px] w-[377px]" />
      <MarkBox className="left-[36px] top-[410px] h-[36px] w-[372px]" />
      <MarkBox className="left-[37px] top-[575px] h-[54px] w-[387px]" />
      <Note className="left-[179px] top-[193px]">Cut Z yaitu ketika<br />spindle turun mulai<br />mengukir object dan<br />mulai position 0 / Zero</Note>
      <Note className="left-[203px] top-[373px]">Travel Z adalah ketika CNC menaikkan spindle<br />dan berpindah dari titik satu ketitik yang lain</Note>
      <Note className="left-[228px] top-[446px]">Feed Rate adalah kecepatan pergerakan<br />perpindahan, ukir, travel Z</Note>
    </div>
  );
}
